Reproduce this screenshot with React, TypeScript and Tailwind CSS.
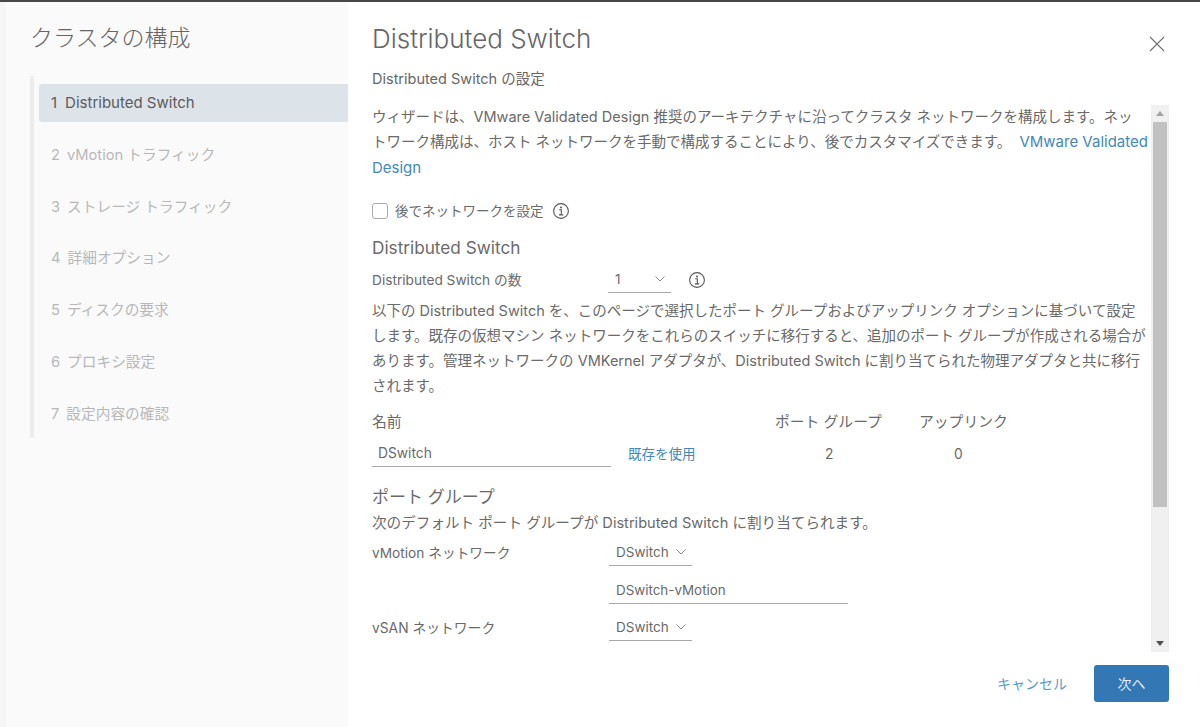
const font = { fontFamily: '"Inter","Noto Sans CJK JP",sans-serif' };

function Info() {
  return (
    <svg width="18" height="18" viewBox="0 0 18 18" fill="none" stroke="#555" className="shrink-0">
      <circle cx="9" cy="9" r="7.4" strokeWidth="1.1" />
      <circle cx="9" cy="5.4" r="1" fill="#555" stroke="none" />
      <path d="M7.2 7.8H9.3V12.7M7 12.9H11.2" strokeWidth="1.1" />
    </svg>
  );
}

function Chevron() {
  return (
    <svg width="12" height="8" viewBox="0 0 12 8" fill="none" stroke="#888" strokeWidth="1">
      <path d="M1.5 1.5L6 6L10.500 1.500" />
    </svg>
  );
}

function Select({ value, className }: { value: string; className: string }) {
  return (
    <div className={`flex items-center justify-between h-[26px] border-b border-[#a8a8a8] pl-[7px] pr-[5px] text-[13.5px] text-[#6a6a6a] ${className}`}>
      <span>{value}</span>
      <Chevron />
    </div>
  );
}

const steps = [
  "vMotion トラフィック",
  "ストレージ トラフィック",
  "詳細オプション",
  "ディスクの要求",
  "プロキシ設定",
  "設定内容の確認",
];

export default function App() {
  return (
    <div className="w-[1200px] h-[727px] overflow-hidden bg-[#f6f6f6] flex flex-col" style={font}>
      <div className="h-[2px] bg-[#484848] shrink-0" />
      <div className="flex flex-1 min-h-0 pl-[6px]">
        <aside className="w-[342px] shrink-0 bg-[#fafafa] pl-[24px] pt-[22px]">
          <h1 className="text-[23px] leading-[28px] font-light text-[#666]">クラスタの構成</h1>
          <div className="mt-[24px] border-l-[4px] border-[#ececec] pt-[8px] pl-[5px] h-[362px]">
            <div className="h-[38px] bg-[#dce3e9] rounded-l-[3px] flex items-center pl-[12px] text-[15px] text-[#5c5c5c]">
              <span className="mr-[8px]">1</span>Distributed Switch
            </div>
            {steps.map((s, i) => (
              <div key={s} className="h-[38px] mt-[13.800px] flex items-center pl-[12px] text-[14.700px] text-[#b8b8b8]">
                <span className="mr-[7px]">{i + 2}</span>{s}
              </div>
            ))}
          </div>
        </aside>
        <main className="flex-1 min-w-0 bg-white flex flex-col pl-[24px] pr-[31px]">
          <div className="flex items-start justify-between h-[62px] pt-[22px] shrink-0">
            <h2 className="text-[26px] leading-[30px] font-light text-[#666]">Distributed Switch</h2>
            <svg width="16" height="16" viewBox="0 0 16 16" fill="none" stroke="#707070" strokeWidth="1.1" className="mt-[12px] mr-[4px]">
              <path d="M1 1L15 15M15 1L1 15" />
            </svg>
          </div>
          <div className="text-[14.500px] leading-[30px] h-[41px] text-[#666] shrink-0">Distributed Switch の設定</div>
          <div className="h-[547px] flex shrink-0">
            <div className="flex-1 min-w-0 overflow-hidden text-[#6a6a6a]">
              <p className="text-[14.500px] leading-[25.300px] mt-[-1px]">
                ウィザードは、VMware Validated Design 推奨のアーキテクチャに沿ってクラスタ ネットワークを構成します。ネッ<br />トワーク構成は、ホスト ネットワークを手動で構成することにより、後でカスタマイズできます。 <span className="ml-[4px] text-[15px] text-[#4489b5]">VMware Validated<br />Design</span>
              </p>
              <div className="flex items-center h-[20px] mt-[21px] text-[13.500px]">
                <span className="w-[16px] h-[16px] border border-[#aaa] rounded-[3px] bg-white shrink-0 mr-[7px]" />
                <span>後でネットワークを設定</span>
                <span className="ml-[8px] flex"><Info /></span>
              </div>
              <h3 className="text-[17.200px] leading-[22px] mt-[16px] font-normal">Distributed Switch</h3>
              <div className="flex items-center h-[26px] mt-[8px] text-[13.700px]">
                <span className="w-[236px] shrink-0">Distributed Switch の数</span>
                <Select value="1" className="w-[63px]" />
                <span className="ml-[17px] flex"><Info /></span>
              </div>
              <p className="text-[14.500px] leading-[25px] mt-[5px] pr-[2px]">
                以下の Distributed Switch を、このページで選択したポート グループおよびアップリンク オプションに基づいて設定します。既存の仮想マシン ネットワークをこれらのスイッチに移行すると、追加のポート グループが作成される場合があります。管理ネットワークの VMKernel アダプタが、Distributed Switch に割り当てられた物理アダプタと共に移行されます。
              </p>
              <div className="flex items-center h-[24px] mt-[12px] text-[14.800px]">
                <span className="w-[403px] shrink-0">名前</span>
                <span className="w-[144px] shrink-0">ポート グループ</span>
                <span>アップリンク</span>
              </div>
              <div className="flex items-center h-[26px] mt-[7px] text-[13.800px]">
                <div className="w-[239px] h-[26px] shrink-0 border-b border-[#a8a8a8] pl-[6px] flex items-center">DSwitch</div>
                <span className="ml-[17px] w-[197px] shrink-0 text-[13.500px] text-[#4489b5]">既存を使用</span>
                <span className="w-[129px] shrink-0">2</span>
                <span>0</span>
              </div>
              <h3 className="text-[17px] leading-[22px] mt-[19px] font-normal">ポート グループ</h3>
              <div className="text-[14.600px] leading-[20px] mt-[5px]">次のデフォルト ポート グループが Distributed Switch に割り当てられます。</div>
              <div className="flex items-center h-[26px] mt-[7px] text-[13.700px]">
                <span className="w-[237px] shrink-0">vMotion ネットワーク</span>
                <Select value="DSwitch" className="w-[83px]" />
              </div>
              <div className="pl-[237px] mt-[12px]">
                <div className="w-[239px] h-[26px] border-b border-[#a8a8a8] pl-[7px] flex items-center text-[13.400px]">DSwitch-vMotion</div>
              </div>
              <div className="flex items-center h-[26px] mt-[11px] text-[13.800px]">
                <span className="w-[237px] shrink-0">vSAN ネットワーク</span>
                <Select value="DSwitch" className="w-[83px]" />
              </div>
            </div>
            <div className="w-[18px] shrink-0 bg-[#f0f0f0] flex flex-col items-center">
              <div className="h-[17px] flex items-center justify-center">
                <svg width="8" height="5" viewBox="0 0 8 5"><path d="M4 0L8 5H0Z" fill="#a3a3a3" /></svg>
              </div>
              <div className="w-[14px] h-[385px] bg-[#c1c1c1]" />
              <div className="flex-1" />
              <div className="h-[17px] flex items-center justify-center">
                <svg width="8" height="5" viewBox="0 0 8 5"><path d="M0 0H8L4 5Z" fill="#505050" /></svg>
              </div>
            </div>
          </div>
          <div className="flex items-center justify-end mt-[13px] shrink-0">
            <span className="text-[14px] text-[#5c9bbf] mr-[27px]">キャンセル</span>
            <button className="w-[75px] h-[37px] bg-[#3377b5] rounded-[3px] text-[14px] text-[#e6eef5]">次へ</button>
          </div>
        </main>
      </div>
    </div>
  );
}
